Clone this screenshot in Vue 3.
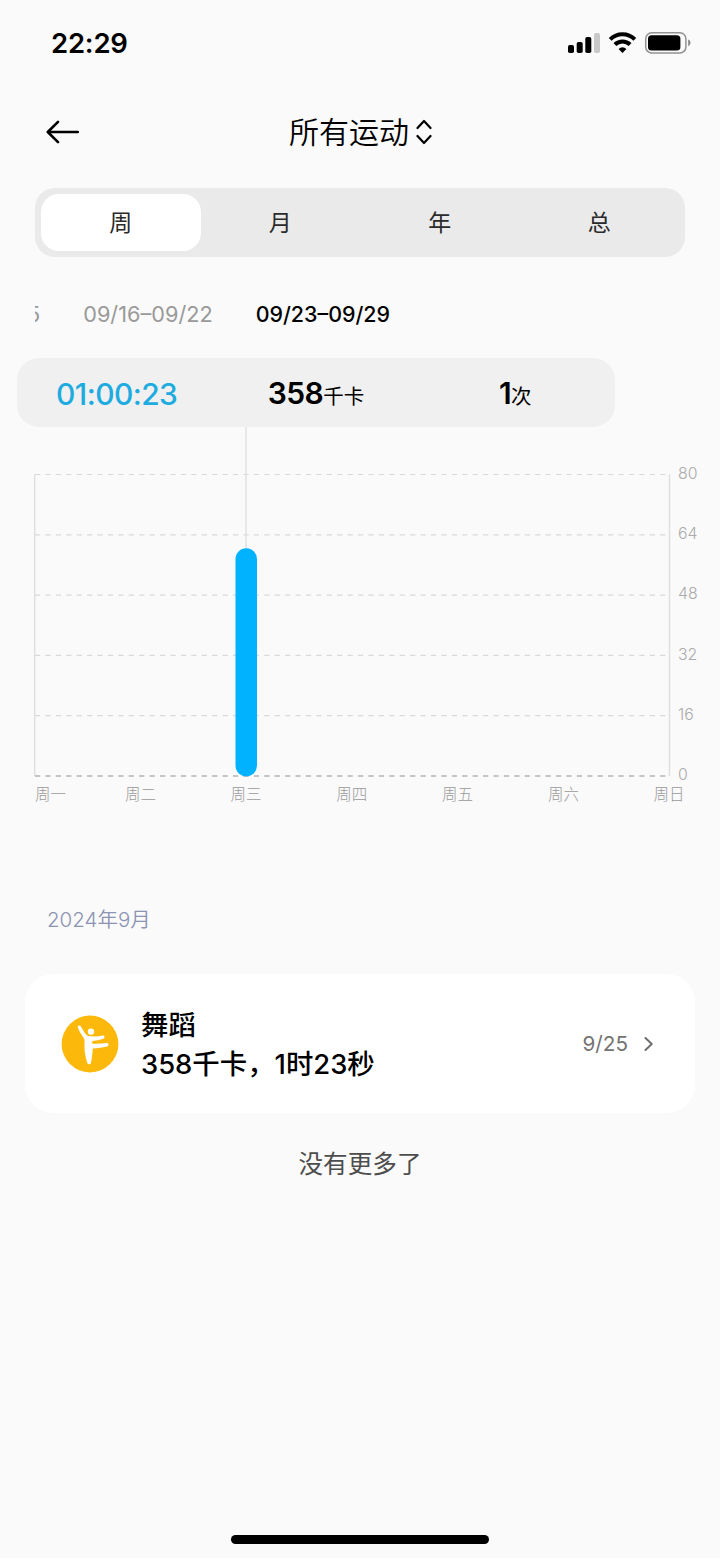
<template>
  <main class="screen">
    <header class="status-bar">
      <span class="clock">22:29</span>
      <svg class="status-icons" width="124" height="24" viewBox="0 0 124 24">
        <rect x="0" y="14" width="6" height="8" rx="1.8" />
        <rect x="8.7" y="11" width="6" height="11" rx="1.8" />
        <rect x="17.3" y="6" width="6" height="16" rx="1.8" />
        <rect x="26" y="2" width="6" height="20" rx="1.8" fill="#c9c9c9" />
        <g fill="none" stroke="#000" stroke-width="4">
          <path d="M42.2 8.4a17.3 17.3 0 0 1 24.6 0" />
          <path d="M46.9 13.5a10.9 10.9 0 0 1 15.2 0" />
        </g>
        <path d="M54.5 21.9l-3.9-4a5.6 5.6 0 0 1 7.8 0z" />
        <rect
          x="77.7"
          y="1.7"
          width="40.2"
          height="20.2"
          rx="6"
          fill="none"
          stroke="#929292"
          stroke-width="1.5"
        />
        <rect x="80" y="4.2" width="32.4" height="15.2" rx="3.5" />
        <path d="M120.2 8.6c3 1 3 5.6 0 6.6z" fill="#858585" />
      </svg>
    </header>

    <nav class="nav-bar">
      <svg class="back" width="34" height="24" viewBox="0 0 34 24">
        <path d="M12 1.8L1.8 12L12 22.2M2 12H31.8" />
      </svg>
      <h1>所有运动</h1>
      <svg class="sort" width="16" height="26" viewBox="0 0 16 26">
        <path d="M1.5 9L8 2L14.5 9M1.5 17L8 24L14.5 17" />
      </svg>
    </nav>

    <div class="tabs">
      <button
        v-for="tab in tabs"
        :key="tab"
        class="tab"
        :class="{ active: tab === activeTab }"
        @click="activeTab = tab"
      >
        {{ tab }}
      </button>
    </div>

    <div class="weeks">
      <span class="week">09/09–09/15</span>
      <span class="week">09/16–09/22</span>
      <span class="week selected">09/23–09/29</span>
    </div>

    <section class="summary">
      <p class="duration">01:00:23</p>
      <p><b>358</b><small>千卡</small></p>
      <p><b>1</b><small>次</small></p>
    </section>

    <svg class="chart" width="720" height="393" viewBox="0 0 720 393">
      <line class="axis" x1="34.7" y1="47.5" x2="34.7" y2="349" />
      <line class="axis" x1="669.5" y1="47.5" x2="669.5" y2="349" />
      <g v-for="(mark, index) in marks" :key="mark">
        <line
          class="grid"
          :class="{ base: mark === 0 }"
          x1="35"
          :y1="gridY(index)"
          x2="668"
          :y2="gridY(index)"
        />
        <text class="mark" x="678" :y="gridY(index) + 4.3">{{ mark }}</text>
      </g>
      <line class="pointer" x1="246" y1="0" x2="246" y2="123" />
      <rect class="bar" x="235.5" y="121.3" width="21.5" height="228" rx="10.7" />
      <text v-for="day in days" :key="day.name" class="day" :x="day.x" y="373.3">
        {{ day.name }}
      </text>
    </svg>

    <h2>2024年9月</h2>

    <article class="record">
      <svg class="dance" width="58" height="58" viewBox="0 0 58 58">
        <circle cx="29" cy="29" r="28.4" fill="#fdb90b" />
        <g fill="#fff">
          <circle cx="30" cy="16.6" r="3.2" />
          <path
            d="M16.800 11.200c.8-1.200 2.400-1 3.100.3l3.700 6.300c1 1.600 2.200 2.800 4 3.200 4.800.8 9.600.6 14.300-.4 1.900-.2 2.200 2.500.5 3.100-3.500 1.200-7.300 2-11.100 2.400l-.2 2.600c5.200.2 10-.1 14.700-.6 2.200-.1 2.300 3 .2 3.400-4.500 1-9.400 1.700-14.300 2-.2 5-.8 9.800-1.700 14.200-.4 2.200-3.400 2-3.900-.1-1.700-5.600-2.700-11.200-2.700-17l.2-4.700c-.1-1.400-.6-2.600-1.400-3.700-2.300-3-4-6.100-5.400-9.600-.2-.5-.2-1 0-1.400z"
          />
        </g>
      </svg>
      <div class="record-text">
        <p>舞蹈</p>
        <p class="detail">358千卡，1时23秒</p>
      </div>
      <span class="date">9/25</span>
      <svg class="more" width="10" height="14" viewBox="0 0 10 14">
        <path d="M1.5 1L7.7 7L1.5 13" />
      </svg>
    </article>

    <p class="end">没有更多了</p>
    <div class="home-indicator"></div>
  </main>
</template>

<script setup>
import { ref } from "vue";

const tabs = ["周", "月", "年", "总"];
const activeTab = ref("周");

const marks = [80, 64, 48, 32, 16, 0];
const gridY = (index) => 47.5 + index * 60.3;

const days = [
  { name: "周一", x: 35 },
  { name: "周二", x: 125 },
  { name: "周三", x: 230.5 },
  { name: "周四", x: 336.3 },
  { name: "周五", x: 442 },
  { name: "周六", x: 548 },
  { name: "周日", x: 653.5 },
];
</script>

<style>
body {
  background: #fafafa;
}
</style>

<style scoped>
.screen {
  width: 720px;
  height: 1558px;
  display: flex;
  flex-direction: column;
  overflow: hidden;
  background: #fafafa;
  color: #000;
  font-family: Inter, "Noto Sans CJK SC", sans-serif;
}

h1,
h2,
p {
  margin: 0;
  font-weight: 400;
}

.status-bar {
  height: 86px;
  padding: 0 28px 0 51px;
  display: flex;
  align-items: center;
  justify-content: space-between;
}

.clock {
  font-size: 27.5px;
  font-weight: 600;
  letter-spacing: -0.2px;
}

.nav-bar {
  height: 92px;
  padding-left: 46px;
  display: flex;
  align-items: center;
}

.nav-bar path,
.more path {
  fill: none;
  stroke: #000;
  stroke-width: 2.6;
  stroke-linecap: round;
  stroke-linejoin: round;
}

h1 {
  margin-left: 209px;
  font-size: 30px;
  font-weight: 350;
  line-height: 40px;
}

.sort {
  margin-left: 7px;
}

.nav-bar .sort path {
  stroke-width: 2.2;
}

.tabs {
  height: 69px;
  margin: 10px 35px 0;
  padding: 6px;
  box-sizing: border-box;
  display: flex;
  border-radius: 20px;
  background: #eaeaea;
}

.tab {
  flex: 1;
  padding: 0 0 4px;
  border: 0;
  border-radius: 18px;
  background: none;
  color: #2b2b2b;
  font-family: inherit;
  font-size: 23px;
}

.tab.active {
  background: #fff;
}

.weeks {
  width: 355px;
  height: 101px;
  margin: 0 35px;
  padding-top: 12px;
  box-sizing: border-box;
  display: flex;
  align-items: center;
  justify-content: flex-end;
  gap: 43px;
  overflow: hidden;
}

.week {
  flex: none;
  color: #999;
  font-size: 21.7px;
}

.week.selected {
  color: #000;
  font-size: 21.4px;
  font-weight: 500;
}

.summary {
  width: 598px;
  height: 69px;
  margin-left: 17px;
  display: flex;
  align-items: center;
  border-radius: 22px;
  background: #f0f0f0;
}

.summary p {
  flex: 1;
  padding-top: 5px;
  text-align: center;
  font-size: 30px;
  line-height: 40px;
}

.summary .duration {
  padding-top: 2px;
  color: #1eabdf;
  font-weight: 500;
  letter-spacing: -0.6px;
}

.summary b {
  font-weight: 600;
  letter-spacing: -0.6px;
}

.summary small {
  font-size: 20.5px;
}

.chart {
  flex: none;
}

.axis,
.pointer {
  stroke: #dedede;
  stroke-width: 1.4;
}

.grid {
  stroke: #d9d9d9;
  stroke-width: 1.2;
  stroke-dasharray: 5.2 5.22;
}

.grid.base {
  stroke: #b4b4b4;
  stroke-width: 1.6;
}

.bar {
  fill: #00b2ff;
}

.mark,
.day {
  fill: #aaa;
  font-size: 15.8px;
  font-weight: 300;
}

.day {
  fill: #999;
  font-size: 15.5px;
}

h2 {
  margin: 80px 0 0 47px;
  color: #8c93b3;
  font-size: 20.5px;
  font-weight: 350;
  line-height: 40px;
}

.record {
  height: 139px;
  margin: 34px 25px 0;
  padding: 0 41px 0 36px;
  box-sizing: border-box;
  display: flex;
  align-items: center;
  border-radius: 28px;
  background: #fff;
}

.record-text {
  flex: 1;
  margin-left: 22px;
  padding-top: 3px;
  font-size: 27.4px;
  line-height: 39px;
}

.record-text p {
  font-weight: 500;
}

.date {
  color: #737373;
  font-size: 20.7px;
}

.more {
  margin-left: 16px;
}

.more path {
  stroke: #6e6e6e;
  stroke-width: 2;
}

.end {
  margin-top: 31px;
  color: #4d4d4d;
  font-size: 24.6px;
  line-height: 40px;
  text-align: center;
}

.home-indicator {
  width: 258px;
  height: 9px;
  margin: auto auto 14px;
  border-radius: 5px;
  background: #000;
}
</style>
